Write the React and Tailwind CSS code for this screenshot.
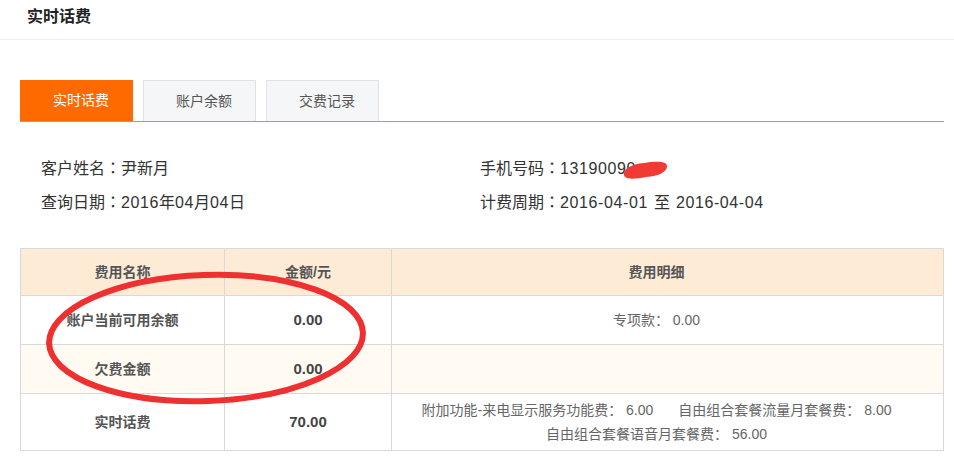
import React from 'react';

const font = { fontFamily: '"Liberation Sans", "Noto Sans CJK SC", sans-serif' };

const tabs = ['实时话费', '账户余额', '交费记录'];

// full-width colon drawn centred, the way the original font shows it
const Colon = () => <span className="font-['Noto_Sans_CJK_TC',sans-serif] leading-[0]">：</span>;
const Num = ({ children }) => <span className="tracking-[0.6px]">{children}</span>;

const rows = [
  { name: '账户当前可用余额', amount: '0.00', detail: ['专项款： 0.00'], bg: 'bg-white', h: 'h-[49px]' },
  { name: '欠费金额', amount: '0.00', detail: [], bg: 'bg-[#fffaf2]', h: 'h-[49px]' },
  { name: '实时话费', amount: '70.00', detail: null, bg: 'bg-white', h: 'h-[57px]' },
];

const App = () => {
  return (
    <div className="w-[954px] h-[462px] bg-white text-[#333] overflow-hidden" style={font}>
      {/* page title */}
      <div className="h-[40px] border-b border-[#efefef] pl-[27px] flex items-center pb-[6px]">
        <h1 className="text-[16px] font-bold text-[#222] m-0">实时话费</h1>
      </div>

      <div className="pl-[20px] pr-[10px]">
        {/* tabs */}
        <div className="mt-[40px] flex gap-[10px] border-b border-[#f08a2c] h-[42px]">
          {tabs.map((t, i) => (
            <div
              key={t}
              className={
                i === 0
                  ? 'w-[113px] h-[41px] pl-[9px] bg-[#ff6a00] text-white text-[14px] flex items-center justify-center'
                  : 'w-[113px] h-[41px] pl-[9px] bg-[#f5f6f8] border border-b-0 border-[#e2e2e2] text-[#555] text-[14px] flex items-center justify-center'
              }
            >
              {t}
            </div>
          ))}
        </div>

        {/* customer info */}
        <div className="pt-[30px] pl-[21px] text-[16px] text-[#333] leading-[34px]">
          <div className="flex h-[34px]">
            <div className="w-[439px]">
              客户姓名<Colon />尹新月
            </div>
            <div className="relative">
              手机号码<Colon />
              <Num>13190090</Num>
              <svg className="absolute left-[141px] top-[6px]" width="48" height="24" viewBox="0 0 48 24">
                <path
                  d="M3 17 C2 11 10 6 23 5 C35 3 46 3 46 8 C46 14 38 18 25 19 C14 21 4 22 3 17 Z"
                  fill="#f23a35"
                />
              </svg>
            </div>
          </div>
          <div className="flex h-[34px]">
            <div className="w-[439px]">
              查询日期<Colon />
              <Num>2016</Num>年<Num>04</Num>月<Num>04</Num>日
            </div>
            <div>
              计费周期<Colon />
              <Num>2016-04-01</Num>
              <span className="mx-[6px]">至</span>
              <Num>2016-04-04</Num>
            </div>
          </div>
        </div>

        {/* fee table */}
        <div className="relative mt-[28px]">
          <table className="w-[924px] border-collapse text-[14px] text-[#555]">
            <thead>
              <tr className="h-[47px] bg-[#fdebd6]">
                <th className="w-[204px] border border-[#d9d9d9] font-bold">费用名称</th>
                <th className="w-[167px] border border-[#d9d9d9] font-bold">金额/元</th>
                <th className="border border-[#d9d9d9] font-bold pr-[22px]">费用明细</th>
              </tr>
            </thead>
            <tbody>
              {rows.map((r) => (
                <tr key={r.name} className={`${r.h} ${r.bg}`}>
                  <td className="border border-[#d9d9d9] text-center font-bold">{r.name}</td>
                  <td className="border border-[#d9d9d9] text-center font-bold text-[15px] text-[#444]">{r.amount}</td>
                  <td className="border border-[#d9d9d9] text-center text-[#666] pr-[22px] leading-[24px]">
                    {r.detail ? (
                      r.detail.map((d) => <div key={d}>{d}</div>)
                    ) : (
                      <>
                        <div>
                          <span>附加功能-来电显示服务功能费： 6.00</span>
                          <span className="ml-[25px]">自由组合套餐流量月套餐费： 8.00</span>
                        </div>
                        <div>自由组合套餐语音月套餐费： 56.00</div>
                      </>
                    )}
                  </td>
                </tr>
              ))}
            </tbody>
          </table>

          {/* hand-drawn red circle */}
          <svg className="absolute left-0 top-0 pointer-events-none" width="400" height="180" viewBox="0 0 400 180">
            <ellipse
              cx="186"
              cy="90"
              rx="157"
              ry="63"
              transform="rotate(-2 186 90)"
              fill="none"
              stroke="#ee3030"
              strokeWidth="6"
            />
          </svg>
        </div>
      </div>
    </div>
  );
};

export default App;
